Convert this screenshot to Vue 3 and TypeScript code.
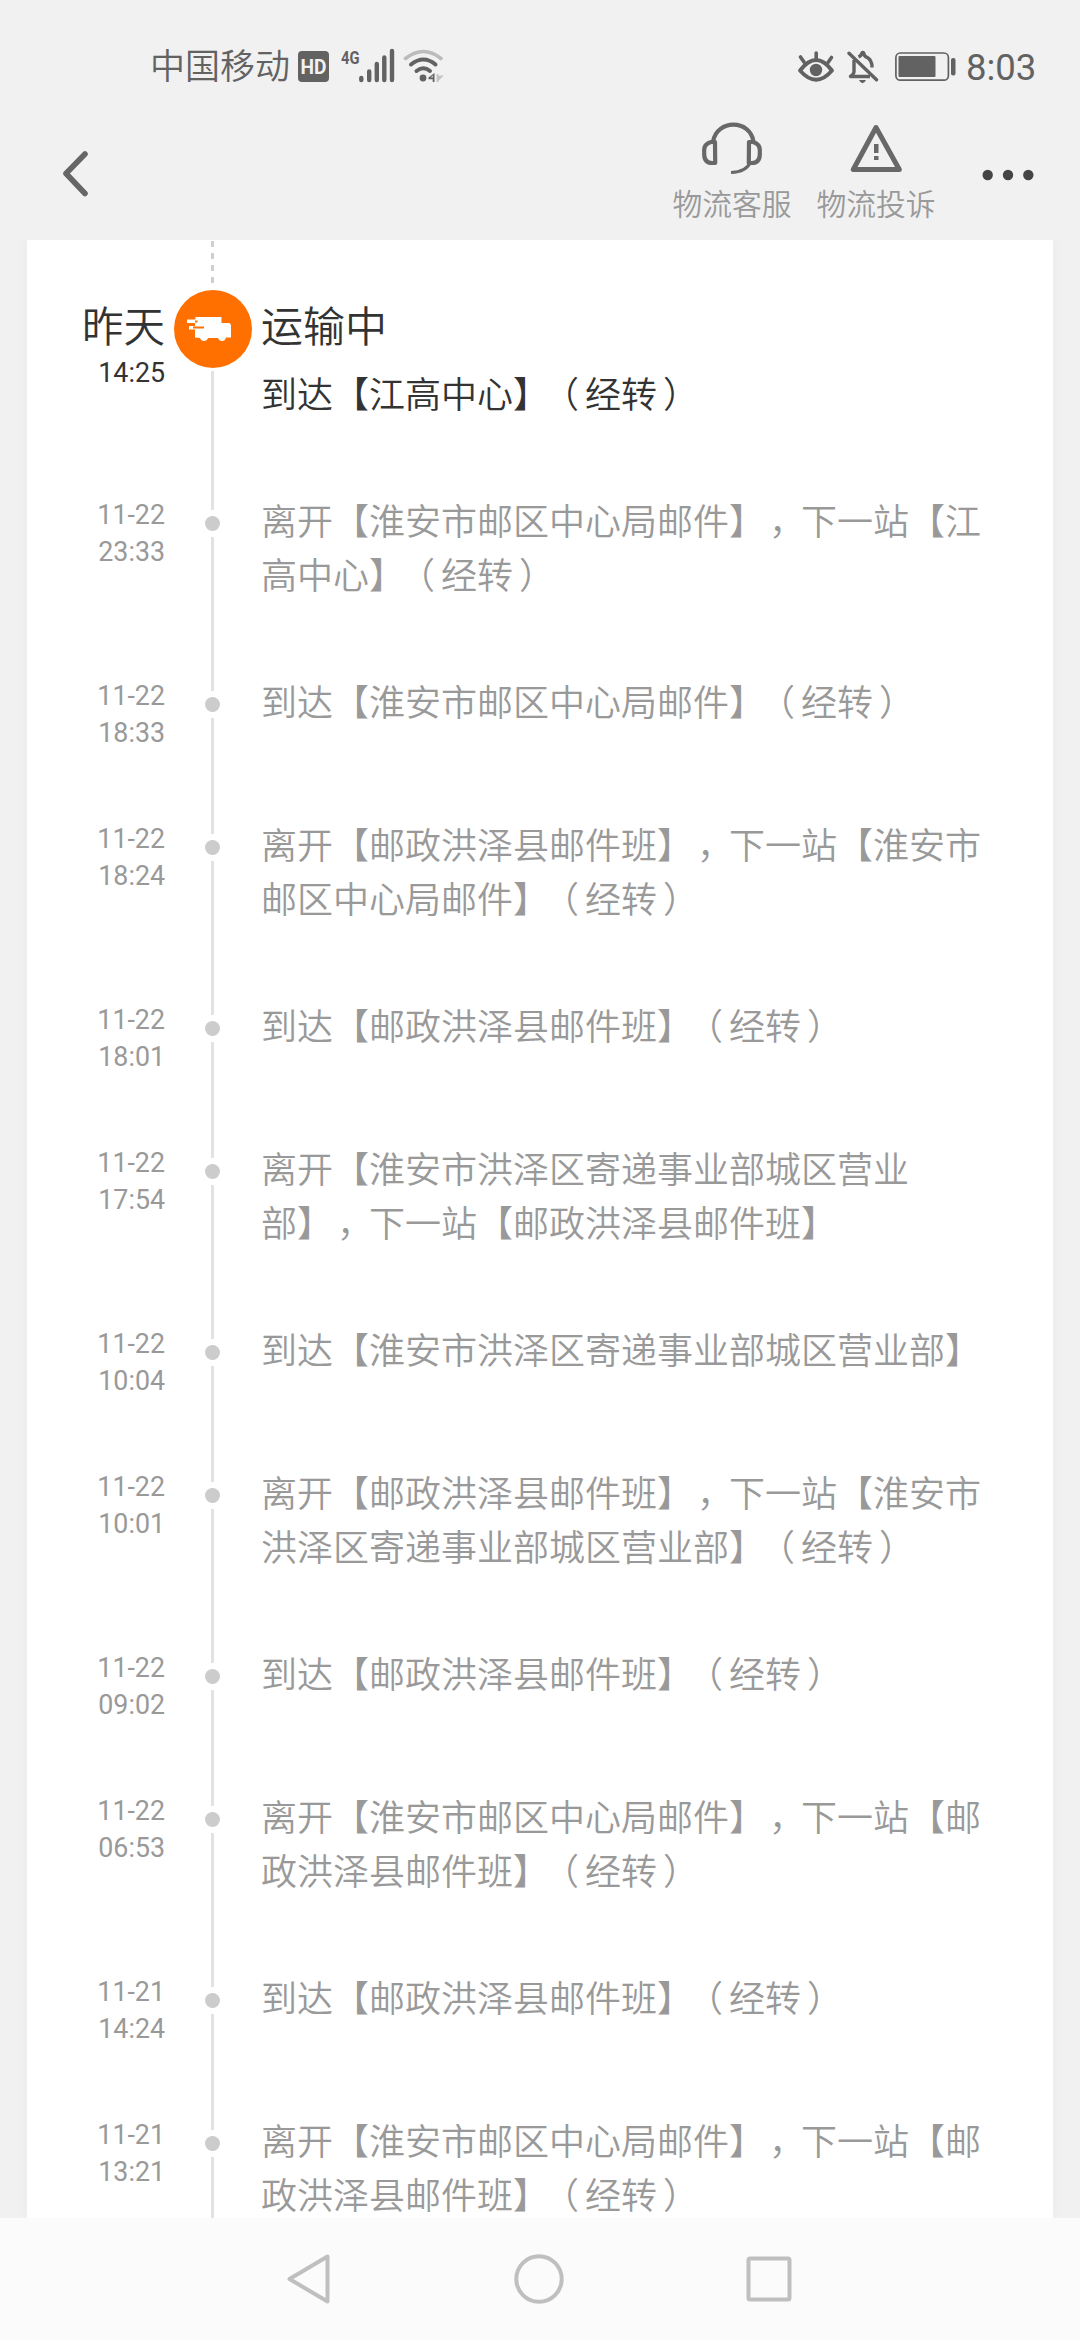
<script setup lang="ts">
interface TrackEvent {
  date: string
  time: string
  lines: string[]
}

const events: TrackEvent[] = [
  { date: '11-22', time: '23:33', lines: ['离开【淮安市邮区中心局邮件】，下一站【江', '高中心】（经转）'] },
  { date: '11-22', time: '18:33', lines: ['到达【淮安市邮区中心局邮件】（经转）'] },
  { date: '11-22', time: '18:24', lines: ['离开【邮政洪泽县邮件班】，下一站【淮安市', '邮区中心局邮件】（经转）'] },
  { date: '11-22', time: '18:01', lines: ['到达【邮政洪泽县邮件班】（经转）'] },
  { date: '11-22', time: '17:54', lines: ['离开【淮安市洪泽区寄递事业部城区营业', '部】，下一站【邮政洪泽县邮件班】'] },
  { date: '11-22', time: '10:04', lines: ['到达【淮安市洪泽区寄递事业部城区营业部】'] },
  { date: '11-22', time: '10:01', lines: ['离开【邮政洪泽县邮件班】，下一站【淮安市', '洪泽区寄递事业部城区营业部】（经转）'] },
  { date: '11-22', time: '09:02', lines: ['到达【邮政洪泽县邮件班】（经转）'] },
  { date: '11-22', time: '06:53', lines: ['离开【淮安市邮区中心局邮件】，下一站【邮', '政洪泽县邮件班】（经转）'] },
  { date: '11-21', time: '14:24', lines: ['到达【邮政洪泽县邮件班】（经转）'] },
  { date: '11-21', time: '13:21', lines: ['离开【淮安市邮区中心局邮件】，下一站【邮', '政洪泽县邮件班】（经转）'] },
]

// Split a line so that parentheses and commas can be placed nearer the middle of their cell
const parts = (line: string): string[] => line.split(/([（），])/).filter((p) => p !== '')
const kind = (p: string): string =>
  p === '（' ? 'half open' : p === '）' ? 'half close' : p === '，' ? 'half comma' : ''
</script>

<template>
  <div class="screen">
    <div class="status">
      <span class="carrier">中国移动</span>
      <svg class="hd" width="31" height="44" viewBox="298 45 31 44">
        <rect x="298" y="51" width="31" height="31" rx="4" fill="#626262" />
        <text x="313.5" y="73.5" text-anchor="middle" textLength="26" lengthAdjust="spacingAndGlyphs" class="hd-text">HD</text>
      </svg>
      <svg class="signal" width="54" height="44" viewBox="341 45 54 44">
        <text x="341" y="63.5" textLength="18.5" lengthAdjust="spacingAndGlyphs" class="net">4G</text>
        <g stroke="#626262" stroke-width="4.4" stroke-linecap="round">
          <path d="M361.3 78v2M369.2 71.5v8.5M376.8 64v16M384.3 57.5v22.5M392 51v29" />
        </g>
      </svg>
      <svg class="wifi" width="42" height="44" viewBox="403 45 42 44">
        <g fill="none" stroke-linecap="round">
          <path d="M405.500 58.500Q423.500 44.500 441 58.500" stroke="#bcbcbc" stroke-width="3.600" />
          <path d="M411 64.500Q423.500 54.500 435.500 64.500" stroke="#626262" stroke-width="4" />
          <path d="M416.500 71Q423.500 65.500 430 71" stroke="#626262" stroke-width="4" />
        </g>
        <circle cx="423" cy="78" r="3.400" fill="#626262" />
        <path d="M434.500 73v9h-1.800v-2.800h-4.200v-1.700zM432.700 75.300l-1.800 2.200h1.800z" fill="#626262" />
        <path d="M437.500 74v8M437.500 77l4-.5-4 4" stroke="#c4c4c4" stroke-width="1.800" fill="none" />
      </svg>
      <svg class="eye" width="38" height="44" viewBox="797 45 38 44">
        <path d="M800 70.500Q816.200 49.500 832 70.500Q816.200 89 800 70.500Z" fill="none" stroke="#626262" stroke-width="3.800" stroke-linejoin="round" />
        <circle cx="816" cy="70" r="6.200" fill="#626262" />
        <path d="M816.200 53v6M800.500 57l3.500 5M831.500 57.500l-3.500 5" stroke="#626262" stroke-width="3.600" stroke-linecap="round" />
      </svg>
      <svg class="bell" width="32" height="44" viewBox="847 45 32 44">
        <g fill="none" stroke="#626262" stroke-width="3.400">
          <path d="M854 60v11.500q0 2.500-3.500 5h19.500" stroke-linejoin="round" />
          <path d="M858.500 57q3-1.500 3.200-3.500 .8-1.800 2-.5 .5 3.500 3.300 4.300 5.200 3 5 10.200" />
          <path d="M849 53.300l27.500 26.500" stroke-linecap="round" />
        </g>
        <path d="M859 80h7q-1.500 3.300-3.500 3.300t-3.500-3.300z" fill="#626262" />
      </svg>
      <svg class="battery" width="62" height="44" viewBox="895 45 62 44">
        <rect x="895.900" y="53" width="52.500" height="27.200" rx="4.500" fill="none" stroke="#626262" stroke-width="1.700" />
        <rect x="898.500" y="56" width="37" height="21" rx="1" fill="#626262" />
        <rect x="951" y="58" width="4.500" height="17.500" rx="2" fill="#626262" />
      </svg>
      <span class="clock">8:03</span>
    </div>

    <div class="header">
      <svg class="back" width="32" height="50" viewBox="60 149 32 50">
        <path d="M85 154L66 173.500L85 193.500" fill="none" stroke="#666" stroke-width="5.600" stroke-linecap="round" stroke-linejoin="round" />
      </svg>
      <div class="action">
        <svg width="64" height="56" viewBox="700 121 64 56">
          <g fill="none" stroke="#686868" stroke-width="4.200">
            <path d="M713 141.500C717 119 750 119 753.500 141.500" />
            <path d="M715 142h-4q-6.800 2-6.800 8v4q0 9 8 9h3z" stroke-linejoin="round" />
            <path d="M749 142h4q6.800 2 6.800 8v4q0 9-8 9h-3z" stroke-linejoin="round" />
            <path d="M750.500 162q-4 10-19.500 10.500" stroke-width="3.200" />
          </g>
        </svg>
        <span>物流客服</span>
      </div>
      <div class="action second">
        <svg width="56" height="56" viewBox="848 121 56 56">
          <path d="M876 127.500L853.300 169.500H899.300Z" fill="none" stroke="#686868" stroke-width="5" stroke-linejoin="round" />
          <path d="M874 144h4.500v9h-4.500zM874 156h4.500v4h-4.500z" fill="#686868" />
        </svg>
        <span>物流投诉</span>
      </div>
      <svg class="more" width="54" height="14" viewBox="981 168 54 14">
        <g fill="#444">
          <circle cx="987.700" cy="175" r="5.200" /><circle cx="1008" cy="175" r="5.200" /><circle cx="1028.300" cy="175" r="5.200" />
        </g>
      </svg>
    </div>

    <div class="content">
      <div class="card">
        <div class="row current">
          <div class="when">
            <span class="day">昨天</span>
            <span class="hour">14:25</span>
          </div>
          <div class="rail">
            <div class="dashes"></div>
            <svg class="truck" width="78" height="78" viewBox="174 290 78 78">
              <circle cx="213" cy="329" r="39" fill="#ff7000" />
              <path d="M195.500 317H221.500V323H229.500L231 325V337.500H226Q225 341 222 341T218 338H208Q207 341 204 341T200 338L195 337.500V329.500H189V326H195V323H187V319.500H195.500Z" fill="#fff" />
              <path d="M186 324.300h9M195 321.500h2.500M193 327.500h11" stroke="#ff7000" stroke-width="2" />
            </svg>
            <div class="track"></div>
          </div>
          <div class="what">
            <div class="state">运输中</div>
            <div class="line">
              <span v-for="(p, j) in parts('到达【江高中心】（经转）')" :key="j" :class="kind(p)">{{ p }}</span>
            </div>
          </div>
        </div>

        <div v-for="(e, i) in events" :key="i" class="row" :class="{ tall: e.lines.length > 1 }">
          <div class="when">
            <span class="hour">{{ e.date }}</span>
            <span class="hour">{{ e.time }}</span>
          </div>
          <div class="rail">
            <div class="stub"></div>
            <div class="dot"></div>
            <div class="track"></div>
          </div>
          <div class="what">
            <div v-for="(l, k) in e.lines" :key="k" class="line">
              <span v-for="(p, j) in parts(l)" :key="j" :class="kind(p)">{{ p }}</span>
            </div>
          </div>
        </div>
      </div>
    </div>

    <div class="nav">
      <svg width="50" height="56" viewBox="284 2251 50 56">
        <path d="M289.500 2279L327.500 2256.500V2301.500Z" fill="none" stroke="#bfbfbf" stroke-width="4" stroke-linejoin="round" />
      </svg>
      <svg width="56" height="56" viewBox="512 2251 56 56">
        <circle cx="540" cy="2279" r="22.700" fill="none" stroke="#bfbfbf" stroke-width="4" />
      </svg>
      <svg width="50" height="56" viewBox="744 2251 50 56">
        <rect x="748.500" y="2258.500" width="41" height="41" rx="1.500" fill="none" stroke="#bfbfbf" stroke-width="4" />
      </svg>
    </div>
  </div>
</template>

<style>
body {
  margin: 0;
}
</style>

<style scoped>
.screen {
  width: 1080px;
  height: 2340px;
  display: flex;
  flex-direction: column;
  overflow: hidden;
  background: #f1f1f1;
  font-family: Roboto, 'Noto Sans CJK SC', sans-serif;
  font-weight: 350;
}
svg {
  display: block;
  flex: none;
}
.status {
  height: 89px;
  padding: 45px 44px 0 150px;
  box-sizing: border-box;
  display: flex;
  color: #626262;
  flex: none;
}
.carrier {
  width: 148px;
  font-size: 35px;
  line-height: 46px;
  white-space: nowrap;
}
.hd-text {
  font: 700 20px Roboto, sans-serif;
  fill: #f1f1f1;
}
.net {
  font: 700 19px Roboto, sans-serif;
  fill: #626262;
}
.signal {
  margin-left: 12px;
}
.wifi {
  margin-left: 8px;
}
.eye {
  margin-left: auto;
}
.bell {
  margin-left: 12px;
}
.battery {
  margin-left: 16px;
}
.clock {
  width: 70px;
  margin-left: 9px;
  font-size: 36.5px;
  font-weight: 400;
  line-height: 45px;
  white-space: nowrap;
}
.header {
  height: 151px;
  flex: none;
  box-sizing: border-box;
  display: flex;
  align-items: flex-start;
  padding: 0 45px 0 60px;
}
.back {
  margin-top: 60px;
}
.action {
  margin-left: auto;
  padding-top: 32px;
  width: 120px;
  display: flex;
  flex-direction: column;
  align-items: center;
  font-size: 29.8px;
  line-height: 40px;
  color: #999;
  white-space: nowrap;
}
.action span {
  margin-top: 8px;
}
.action.second {
  margin-left: 24px;
}
.more {
  margin: 79px 0 0 45px;
}
.content {
  height: 1978px;
  flex: none;
  overflow: hidden;
  padding: 0 27px;
}
.card {
  height: 1978px;
  overflow: hidden;
  background: #fff;
  box-shadow: 0 0 14px rgba(0, 0, 0, 0.04);
}
.row {
  height: 143px;
  display: flex;
  color: #999;
}
.row.tall {
  height: 181px;
}
.row.current {
  height: 255px;
  color: #333;
}
.when {
  width: 138px;
  padding-top: 2px;
  box-sizing: border-box;
  display: flex;
  flex-direction: column;
  align-items: flex-end;
  white-space: nowrap;
}
.hour {
  font-size: 26.8px;
  font-weight: 400;
  line-height: 37px;
}
.current .when {
  padding-top: 61px;
}
.day {
  font-size: 41.5px;
  line-height: 54px;
}
.rail {
  width: 95px;
  display: flex;
  flex-direction: column;
  align-items: center;
}
.current .rail {
  padding-top: 1px;
  box-sizing: border-box;
}
.dashes {
  width: 3px;
  height: 42px;
  margin-bottom: 7px;
  background: repeating-linear-gradient(#cfcfcf 0 6px, transparent 6px 12px);
}
.stub {
  width: 3px;
  height: 15px;
  background: #e2e2e2;
}
.dot {
  width: 15px;
  height: 15px;
  margin: 6px 0;
  border-radius: 50%;
  background: #ccc;
}
.track {
  width: 3px;
  flex: 1;
  background: #e2e2e2;
}
.truck + .track {
  margin-top: 3px;
}
.what {
  flex: 1;
  padding: 1px 0 0 1px;
  white-space: nowrap;
}
.current .what {
  padding-top: 61px;
}
.state {
  font-size: 42px;
  line-height: 54px;
  margin-bottom: 14px;
}
.line {
  display: flex;
  font-size: 36px;
  line-height: 54px;
}
.half {
  width: 18px;
  font-feature-settings: 'halt' 1;
}
.open {
  margin: 0 6px 0 12px;
}
.close {
  margin: 0 12px 0 6px;
}
.comma {
  margin: 0 14px 0 4px;
}
.nav {
  flex: 1;
  display: flex;
  align-items: center;
  justify-content: space-between;
  padding: 0 286px 0 284px;
  background: #fbfbfb;
}
</style>
